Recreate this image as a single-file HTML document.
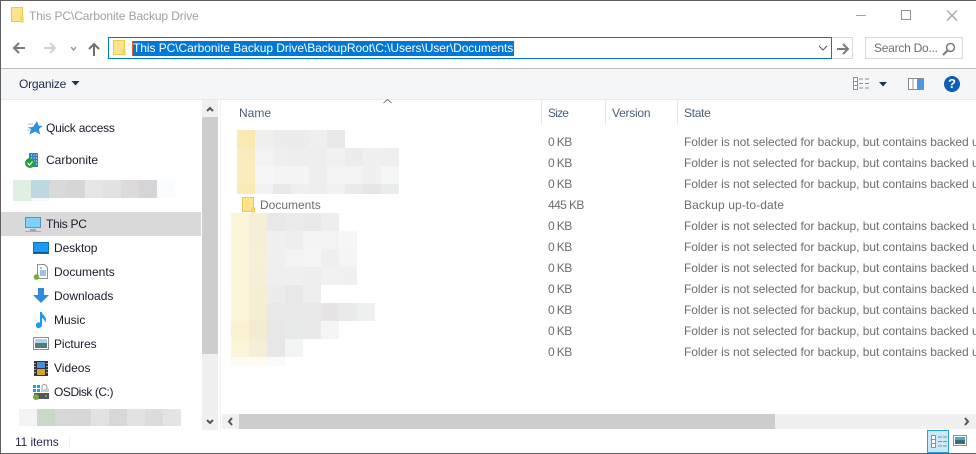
<!DOCTYPE html>
<html><head><meta charset="utf-8"><style>
html,body{margin:0;padding:0;width:976px;height:454px;overflow:hidden;background:#fff}
body{position:relative;font-family:"Liberation Sans",sans-serif;font-size:12px;color:#1b1b2b}
.a{position:absolute}
.t{position:absolute;white-space:nowrap;line-height:16px}
svg{position:absolute;overflow:visible}
.m{position:absolute}
.g{color:#6d6d6d}
.f{letter-spacing:-.04px}
.z{letter-spacing:-.6px}
</style></head><body>
<!-- window border -->
<div class="a" style="left:0;top:0;width:976px;height:1px;background:#5f5f5f"></div>
<div class="a" style="left:0;top:0;width:1px;height:454px;background:#5f5f5f"></div>
<div class="a" style="left:0;top:453px;width:976px;height:1px;background:#5f5f5f"></div>

<!-- title -->
<svg style="left:11px;top:7px" width="13" height="16" viewBox="0 0 13 16"><rect x=".5" y=".5" width="11" height="14" fill="#ffe38c" stroke="#eec94f"/><path d="M10 15V10h2v5z" fill="#ffe38c" stroke="#eec94f" stroke-width="1"/></svg>
<div class="t" style="left:29px;top:8px;color:#a0a0a0;font-size:12px;letter-spacing:-.1px">This PC\Carbonite Backup Drive</div>
<svg style="left:856px;top:10px" width="102" height="12"><path d="M0 5.500h10" stroke="#a0a0a0"/><rect x="45.500" y=".5" width="9" height="9" fill="none" stroke="#8f8f8f"/><path d="M91 .5l10 10M101 .5l-10 10" stroke="#8f8f8f" fill="none"/></svg>

<!-- nav -->
<svg style="left:13px;top:41px" width="95" height="16"><path d="M1 7h11M6 2L1 7l5 5" stroke="#7a7a7a" stroke-width="2" fill="none"/><path d="M31 7h11M37 2l5 5-5 5" stroke="#d2d2d2" stroke-width="2" fill="none"/><path d="M58 6l2.500 3L63 6" stroke="#9a9a9a" stroke-width="1.400" fill="none"/><path d="M81 15V3M76 8l5-5 5 5" stroke="#6f6f6f" stroke-width="2" fill="none"/></svg>

<!-- address -->
<div class="a" style="left:108px;top:37px;width:722px;height:20px;border:1px solid #0078d7"></div>
<svg style="left:113px;top:40px" width="13" height="16" viewBox="0 0 13 16"><rect x=".5" y=".5" width="11" height="14" fill="#ffe38c" stroke="#eec94f"/><path d="M10 15V10h2v5z" fill="#ffe38c" stroke="#eec94f"/></svg>
<div class="a" style="left:132px;top:41px;width:1px;height:15px;background:#e4632a"></div>
<div class="t" style="left:133px;top:41px;height:15px;line-height:15px;background:#0078d7;color:#fff;width:381px;overflow:hidden;letter-spacing:-.06px">This PC\Carbonite Backup Drive\BackupRoot\C:\Users\User\Documents</div>
<svg style="left:818px;top:45px" width="10" height="7"><path d="M1 1l4 4 4-4" stroke="#555" fill="none"/></svg>
<div class="a" style="left:832px;top:37px;width:20px;height:20px;border:1px solid #d9d9d9;border-left:0"></div>
<svg style="left:836px;top:43px" width="14" height="12"><path d="M1 6h11M7 1l5 5-5 5" stroke="#7c7c7c" stroke-width="2" fill="none"/></svg>
<div class="a" style="left:865px;top:37px;width:96px;height:20px;border:1px solid #d9d9d9"></div>
<div class="t g" style="left:874px;top:40px;letter-spacing:-.25px">Search Do...</div>
<svg style="left:942px;top:42px" width="14" height="14"><circle cx="8.500" cy="5.500" r="4" fill="none" stroke="#7c7c7c" stroke-width="1.500"/><path d="M5.500 8.500L1 13" stroke="#7c7c7c" stroke-width="2"/></svg>

<!-- toolbar -->
<div class="a" style="left:1px;top:68px;width:975px;height:1px;background:#bcbcbc"></div>
<div class="a" style="left:1px;top:69px;width:975px;height:30px;background:#f5f6f7"></div>
<div class="a" style="left:1px;top:99px;width:975px;height:1px;background:#e9e9e9"></div>
<div class="t" style="left:19px;top:76px;color:#1e2a4a;letter-spacing:-.2px">Organize</div>
<svg style="left:71px;top:81px" width="9" height="5"><path d="M.5 0h8L4.500 4.500z" fill="#1e3355"/></svg>
<svg style="left:853px;top:77px" width="17" height="13"><path d="M.5.500h4v12h-4zM.5 4.500h4M.5 8.500h4" stroke="#8f8f8f" fill="#fff"/><path d="M6 2h4M12 2h4M6 6.500h4M12 6.500h4M6 11h4M12 11h4" stroke="#8f8f8f"/></svg>
<svg style="left:879px;top:82px" width="8" height="5"><path d="M0 0h8L4 4.500z" fill="#1e3355"/></svg>
<svg style="left:908px;top:78px" width="16" height="12"><rect x=".5" y=".5" width="15" height="11" fill="#fff" stroke="#8a8a8a"/><rect x="9" y="1" width="6" height="10" fill="#4a98e0"/><path d="M5 1v10" stroke="#9a9a9a"/></svg>
<div class="a" style="left:944px;top:76px;width:16px;height:16px;border-radius:50%;background:#0c5fb4;color:#fff;font-weight:bold;font-size:13px;line-height:16px;text-align:center">?</div>

<!-- sidebar -->
<svg style="left:27px;top:121px" width="15" height="14"><path d="M10 0l1.500 4.500L15.500 5 12 8l1 5.500-5-3-5.500 3 1.500-5.500L.5 6.500l5.500-.5z" fill="#2c8fdf"/><path d="M1 3h5M0 9h3" stroke="#8cc4ef"/></svg>
<div class="t" style="left:46px;top:120px;letter-spacing:-.22px">Quick access</div>
<svg style="left:25px;top:153px" width="14" height="14"><rect x="4" y="0" width="9" height="14" fill="#2c7fd0"/><path d="M6 2h1M8.500 2h1M11 2h1M6 5h1M8.500 5h1M11 5h1M9 8h1M11 8h1M9 11h1M11 11h1" stroke="#fff"/><circle cx="5" cy="10" r="5" fill="#21a038"/><path d="M2.500 10l2 2 3-3.500" stroke="#fff" stroke-width="1.200" fill="none"/></svg>
<div class="t" style="left:46px;top:152px">Carbonite</div>
<div class="m" style="left:13px;top:180px;width:18px;height:21px;background:#dff0e3"></div>
<div class="m" style="left:31px;top:180px;width:18px;height:18px;background:#bcd8e2"></div>
<div class="m" style="left:31px;top:198px;width:18px;height:3px;background:#f3f8f4"></div>
<div class="m" style="left:49px;top:180px;width:18px;height:18px;background:#d9d9d9"></div>
<div class="m" style="left:67px;top:180px;width:18px;height:18px;background:#d6d6d6"></div>
<div class="m" style="left:85px;top:180px;width:18px;height:18px;background:#e6e6e8"></div>
<div class="m" style="left:103px;top:180px;width:18px;height:18px;background:#e2e2e2"></div>
<div class="m" style="left:121px;top:180px;width:18px;height:18px;background:#dcdada"></div>
<div class="m" style="left:139px;top:180px;width:18px;height:18px;background:#d6d4d6"></div>
<div class="m" style="left:157px;top:180px;width:18px;height:18px;background:#fbfcfe"></div>

<div class="a" style="left:1px;top:212px;width:200px;height:24px;background:#d9d9d9"></div>
<svg style="left:25px;top:217px" width="16" height="15"><rect x=".5" y=".5" width="15" height="10" fill="#7fd0fb" stroke="#5a93b8"/><path d="M5 13h6" stroke="#8fa9bb" stroke-width="2"/><path d="M0 14.500h16" stroke="#aab"/></svg>
<div class="t" style="left:46px;top:216px;letter-spacing:-.3px">This PC</div>
<svg style="left:33px;top:242px" width="16" height="12"><rect x=".5" y=".5" width="15" height="11" fill="#1a9bf0" stroke="#0b6fc0"/><path d="M1 10.500h14" stroke="#0a4f90"/></svg>
<div class="t" style="left:54px;top:240px;letter-spacing:-.1px">Desktop</div>
<svg style="left:34px;top:264px" width="14" height="16"><path d="M3.500.500h7l3 3v11h-10z" fill="#fff" stroke="#8f8f8f"/><path d="M6 4h2M6 7h6M6 9h6M6 11h6" stroke="#3a86c8"/><circle cx="2.500" cy="13" r="2.800" fill="#7aa83a"/></svg>
<div class="t" style="left:54px;top:264px">Documents</div>
<svg style="left:33px;top:288px" width="16" height="16"><path d="M5 0h6v7h5l-8 8-8-8h5z" fill="#2f8ae0"/></svg>
<div class="t" style="left:54px;top:288px">Downloads</div>
<svg style="left:35px;top:312px" width="12" height="16"><path d="M5 0h2c0 3 4 4 4 8 0 1-.5 2-1 2.500 0-2-1.500-4-3-4.500v7c0 2-2 3-4 3S1 14 1 12.500 3 10 5 10.500z" fill="#1a9bf0"/></svg>
<div class="t" style="left:54px;top:312px">Music</div>
<svg style="left:33px;top:337px" width="16" height="13"><rect x=".5" y=".5" width="15" height="12" fill="#fff" stroke="#8f8f8f"/><rect x="2" y="2" width="12" height="4" fill="#a9d3ee"/><rect x="2" y="6" width="12" height="5" fill="#4d7f78"/></svg>
<div class="t" style="left:54px;top:336px;letter-spacing:-.1px">Pictures</div>
<svg style="left:34px;top:361px" width="14" height="15"><rect width="14" height="15" fill="#333"/><rect x="3" y="1" width="8" height="6" fill="#4a8ee0"/><rect x="3" y="8" width="8" height="6" fill="#d8a030"/><path d="M1 2v1M1 5v1M1 8v1M1 11v1M13 2v1M13 5v1M13 8v1M13 11v1" stroke="#fff"/></svg>
<div class="t" style="left:54px;top:360px">Videos</div>
<svg style="left:33px;top:384px" width="16" height="16"><path d="M0 1h3v3H0zM4 1h3v3H4zM0 5h3v3H0zM4 5h3v3H4z" fill="#1a9bf0"/><path d="M9 6V3a2.500 2.500 0 0 1 5 0v3" fill="none" stroke="#9a9a9a"/><rect x="8" y="5" width="8" height="3" fill="#ccc"/><rect x="1" y="9" width="15" height="6" fill="#555"/><circle cx="3" cy="13" r="3" fill="#7aa83a"/><path d="M12 12h2" stroke="#7fe07f"/></svg>
<div class="t" style="left:54px;top:384px;letter-spacing:-.45px">OSDisk (C:)</div>
<div class="m" style="left:19px;top:409px;width:18px;height:17px;background:#f3f3f3"></div>
<div class="m" style="left:37px;top:409px;width:18px;height:17px;background:#c9d9c9"></div>
<div class="m" style="left:55px;top:409px;width:18px;height:17px;background:#d9d8d8"></div>
<div class="m" style="left:73px;top:409px;width:18px;height:17px;background:#d8d6d6"></div>
<div class="m" style="left:91px;top:409px;width:18px;height:17px;background:#e2e2e2"></div>
<div class="m" style="left:109px;top:409px;width:18px;height:17px;background:#d8d8d8"></div>
<div class="m" style="left:127px;top:409px;width:18px;height:17px;background:#e2e2e2"></div>
<div class="m" style="left:145px;top:409px;width:18px;height:17px;background:#dcdcdc"></div>
<div class="m" style="left:163px;top:409px;width:18px;height:17px;background:#e4e4e4"></div>

<!-- sidebar scrollbar -->
<div class="a" style="left:202px;top:100px;width:16px;height:330px;background:#f0f0f0"></div>
<div class="a" style="left:202px;top:117px;width:16px;height:237px;background:#cdcdcd"></div>
<svg style="left:206px;top:106px" width="8" height="6"><path d="M1 5l3-3 3 3" stroke="#555" stroke-width="2" fill="none"/></svg>
<svg style="left:206px;top:419px" width="8" height="6"><path d="M1 1l3 3 3-3" stroke="#555" stroke-width="2" fill="none"/></svg>
<div class="a" style="left:220px;top:100px;width:1px;height:330px;background:#f0f0f0"></div>

<!-- header -->
<div class="t" style="left:239px;top:105px;color:#4c607a">Name</div>
<div class="t" style="left:548px;top:105px;color:#4c607a;letter-spacing:-.8px">Size</div>
<div class="t" style="left:612px;top:105px;color:#4c607a;letter-spacing:-.25px">Version</div>
<div class="t" style="left:684px;top:105px;color:#4c607a;letter-spacing:-.3px">State</div>
<svg style="left:383px;top:99px" width="9" height="5"><path d="M.5 4L4.500 .5 8.500 4" stroke="#777" fill="none"/></svg>
<div class="a" style="left:541px;top:100px;width:1px;height:25px;background:#e5e5e5"></div>
<div class="a" style="left:605px;top:100px;width:1px;height:25px;background:#e5e5e5"></div>
<div class="a" style="left:677px;top:100px;width:1px;height:25px;background:#e5e5e5"></div>

<!-- mosaic 1 -->
<div class="m" style="left:237px;top:130px;width:18px;height:18px;background:#fce9b0"></div><div class="m" style="left:255px;top:130px;width:18px;height:18px;background:#f0f0ef"></div><div class="m" style="left:273px;top:130px;width:18px;height:18px;background:#ececec"></div><div class="m" style="left:291px;top:130px;width:18px;height:18px;background:#ebecec"></div><div class="m" style="left:309px;top:130px;width:18px;height:18px;background:#efefee"></div><div class="m" style="left:327px;top:130px;width:18px;height:18px;background:#e8e8e8"></div>
<div class="m" style="left:237px;top:148px;width:18px;height:18px;background:#fcebbd"></div><div class="m" style="left:255px;top:148px;width:18px;height:18px;background:#f3f3f3"></div><div class="m" style="left:273px;top:148px;width:18px;height:18px;background:#efefef"></div><div class="m" style="left:291px;top:148px;width:18px;height:18px;background:#eeeeee"></div><div class="m" style="left:309px;top:148px;width:18px;height:18px;background:#eeeeee"></div><div class="m" style="left:327px;top:148px;width:18px;height:18px;background:#f1f1f1"></div><div class="m" style="left:345px;top:148px;width:18px;height:18px;background:#ececec"></div><div class="m" style="left:363px;top:148px;width:18px;height:18px;background:#f0f0f0"></div><div class="m" style="left:381px;top:148px;width:18px;height:18px;background:#efefef"></div>
<div class="m" style="left:237px;top:166px;width:18px;height:18px;background:#fcebbd"></div><div class="m" style="left:255px;top:166px;width:18px;height:18px;background:#f7f7f7"></div><div class="m" style="left:273px;top:166px;width:18px;height:18px;background:#f4f4f4"></div><div class="m" style="left:291px;top:166px;width:18px;height:18px;background:#f4f4f4"></div><div class="m" style="left:309px;top:166px;width:18px;height:18px;background:#eeeeee"></div><div class="m" style="left:327px;top:166px;width:18px;height:18px;background:#f3f3f3"></div><div class="m" style="left:345px;top:166px;width:18px;height:18px;background:#f3f3f3"></div><div class="m" style="left:363px;top:166px;width:18px;height:18px;background:#f0f0f0"></div><div class="m" style="left:381px;top:166px;width:18px;height:18px;background:#f5f6f6"></div>
<div class="m" style="left:237px;top:184px;width:18px;height:10px;background:#fce9b8"></div><div class="m" style="left:255px;top:184px;width:18px;height:10px;background:#f3f2f1"></div><div class="m" style="left:273px;top:184px;width:18px;height:10px;background:#e9e9e9"></div><div class="m" style="left:291px;top:184px;width:18px;height:10px;background:#f0f0f0"></div><div class="m" style="left:309px;top:184px;width:18px;height:10px;background:#eeeeee"></div><div class="m" style="left:327px;top:184px;width:18px;height:10px;background:#f0f1f1"></div><div class="m" style="left:345px;top:184px;width:18px;height:10px;background:#eaeaea"></div><div class="m" style="left:363px;top:184px;width:18px;height:10px;background:#e7e6e4"></div><div class="m" style="left:381px;top:184px;width:18px;height:10px;background:#ebecee"></div>

<!-- documents row -->
<svg style="left:242px;top:197px" width="14" height="16" viewBox="0 0 14 16"><rect x=".5" y=".5" width="11" height="14" fill="#ffe38c" stroke="#eec94f"/><path d="M10 15v-4h2.500v4z" fill="#ffe38c" stroke="#eec94f"/></svg>
<div class="t g" style="left:260px;top:197px">Documents</div>

<!-- mosaic 2 -->
<div class="m" style="left:231px;top:213px;width:18px;height:18px;background:#fdf5da"></div><div class="m" style="left:249px;top:213px;width:18px;height:18px;background:#f6efd8"></div><div class="m" style="left:267px;top:213px;width:18px;height:18px;background:#e8e8e8"></div><div class="m" style="left:285px;top:213px;width:18px;height:18px;background:#ebebeb"></div><div class="m" style="left:303px;top:213px;width:18px;height:18px;background:#e9e9e9"></div><div class="m" style="left:321px;top:213px;width:18px;height:18px;background:#edeef0"></div>
<div class="m" style="left:231px;top:231px;width:18px;height:18px;background:#fdf5da"></div><div class="m" style="left:249px;top:231px;width:18px;height:18px;background:#f6efd8"></div><div class="m" style="left:267px;top:231px;width:18px;height:18px;background:#f0f0f0"></div><div class="m" style="left:285px;top:231px;width:18px;height:18px;background:#eeeeee"></div><div class="m" style="left:303px;top:231px;width:18px;height:18px;background:#f4f4f4"></div><div class="m" style="left:321px;top:231px;width:18px;height:18px;background:#f3f3f3"></div><div class="m" style="left:339px;top:231px;width:18px;height:18px;background:#f6f7f7"></div>
<div class="m" style="left:231px;top:249px;width:18px;height:18px;background:#fdf5da"></div><div class="m" style="left:249px;top:249px;width:18px;height:18px;background:#f7f0d8"></div><div class="m" style="left:267px;top:249px;width:18px;height:18px;background:#f0f0ef"></div><div class="m" style="left:285px;top:249px;width:18px;height:18px;background:#f3f3f3"></div><div class="m" style="left:303px;top:249px;width:18px;height:18px;background:#f5f5f5"></div><div class="m" style="left:321px;top:249px;width:18px;height:18px;background:#efefef"></div><div class="m" style="left:339px;top:249px;width:18px;height:18px;background:#f5f5f5"></div>
<div class="m" style="left:231px;top:267px;width:18px;height:18px;background:#fdf5da"></div><div class="m" style="left:249px;top:267px;width:18px;height:18px;background:#f6efd8"></div><div class="m" style="left:267px;top:267px;width:18px;height:18px;background:#efefef"></div><div class="m" style="left:285px;top:267px;width:18px;height:18px;background:#efefef"></div><div class="m" style="left:303px;top:267px;width:18px;height:18px;background:#eeeeee"></div><div class="m" style="left:321px;top:267px;width:18px;height:18px;background:#f1f1f1"></div><div class="m" style="left:339px;top:267px;width:18px;height:18px;background:#f0f0f0"></div>
<div class="m" style="left:231px;top:285px;width:18px;height:18px;background:#fdf5da"></div><div class="m" style="left:249px;top:285px;width:18px;height:18px;background:#f5eed4"></div><div class="m" style="left:267px;top:285px;width:18px;height:18px;background:#ececec"></div><div class="m" style="left:285px;top:285px;width:18px;height:18px;background:#e8e8e8"></div><div class="m" style="left:303px;top:285px;width:18px;height:18px;background:#eeeeee"></div>
<div class="m" style="left:231px;top:303px;width:18px;height:18px;background:#fdf5da"></div><div class="m" style="left:249px;top:303px;width:18px;height:18px;background:#f5eed4"></div><div class="m" style="left:267px;top:303px;width:18px;height:18px;background:#e8e8e8"></div><div class="m" style="left:285px;top:303px;width:18px;height:18px;background:#e9e9e9"></div><div class="m" style="left:303px;top:303px;width:18px;height:18px;background:#e9e9e9"></div><div class="m" style="left:321px;top:303px;width:18px;height:18px;background:#e7e4e5"></div><div class="m" style="left:339px;top:303px;width:18px;height:18px;background:#e9ebea"></div><div class="m" style="left:357px;top:303px;width:18px;height:18px;background:#eff1f0"></div>
<div class="m" style="left:231px;top:321px;width:18px;height:18px;background:#fcf2d2"></div><div class="m" style="left:249px;top:321px;width:18px;height:18px;background:#f3ecd0"></div><div class="m" style="left:267px;top:321px;width:18px;height:18px;background:#e7e7e7"></div><div class="m" style="left:285px;top:321px;width:18px;height:18px;background:#e8eaea"></div><div class="m" style="left:303px;top:321px;width:18px;height:18px;background:#e9e9e9"></div><div class="m" style="left:321px;top:321px;width:18px;height:18px;background:#f4f6f5"></div>
<div class="m" style="left:231px;top:339px;width:18px;height:18px;background:#fdf5da"></div><div class="m" style="left:249px;top:339px;width:18px;height:18px;background:#f6efd8"></div><div class="m" style="left:267px;top:339px;width:18px;height:18px;background:#e7e7e7"></div><div class="m" style="left:285px;top:339px;width:18px;height:18px;background:#f3f5f4"></div>
<div class="m" style="left:231px;top:357px;width:18px;height:9px;background:#fefbf2"></div><div class="m" style="left:249px;top:357px;width:18px;height:9px;background:#fefbf2"></div><div class="m" style="left:267px;top:357px;width:18px;height:9px;background:#fafafa"></div>

<!-- size/state columns -->
<div class="t g z" style="left:548px;top:134px">0 KB</div><div class="t g f" style="left:684px;top:134px">Folder is not selected for backup, but contains backed up files</div>
<div class="t g z" style="left:548px;top:155px">0 KB</div><div class="t g f" style="left:684px;top:155px">Folder is not selected for backup, but contains backed up files</div>
<div class="t g z" style="left:548px;top:176px">0 KB</div><div class="t g f" style="left:684px;top:176px">Folder is not selected for backup, but contains backed up files</div>
<div class="t g z" style="left:548px;top:197px">445 KB</div><div class="t g" style="left:684px;top:197px;letter-spacing:.12px">Backup up-to-date</div>
<div class="t g z" style="left:548px;top:218px">0 KB</div><div class="t g f" style="left:684px;top:218px">Folder is not selected for backup, but contains backed up files</div>
<div class="t g z" style="left:548px;top:239px">0 KB</div><div class="t g f" style="left:684px;top:239px">Folder is not selected for backup, but contains backed up files</div>
<div class="t g z" style="left:548px;top:260px">0 KB</div><div class="t g f" style="left:684px;top:260px">Folder is not selected for backup, but contains backed up files</div>
<div class="t g z" style="left:548px;top:281px">0 KB</div><div class="t g f" style="left:684px;top:281px">Folder is not selected for backup, but contains backed up files</div>
<div class="t g z" style="left:548px;top:302px">0 KB</div><div class="t g f" style="left:684px;top:302px">Folder is not selected for backup, but contains backed up files</div>
<div class="t g z" style="left:548px;top:323px">0 KB</div><div class="t g f" style="left:684px;top:323px">Folder is not selected for backup, but contains backed up files</div>
<div class="t g z" style="left:548px;top:344px">0 KB</div><div class="t g f" style="left:684px;top:344px">Folder is not selected for backup, but contains backed up files</div>

<!-- hscroll -->
<div class="a" style="left:222px;top:414px;width:754px;height:15px;background:#f0f0f0"></div>
<div class="a" style="left:239px;top:414px;width:536px;height:15px;background:#cdcdcd"></div>
<svg style="left:227px;top:417px" width="6" height="9"><path d="M5 1L2 4.500 5 8" stroke="#555" stroke-width="2" fill="none"/></svg>
<svg style="left:964px;top:417px" width="6" height="9"><path d="M1 1l3 3.500L1 8" stroke="#555" stroke-width="2" fill="none"/></svg>

<!-- status -->
<div class="t" style="left:15px;top:434px;color:#2b2b55;letter-spacing:-.1px">11 items</div>
<div class="a" style="left:69px;top:436px;width:1px;height:12px;background:#efefef"></div>
<div class="a" style="left:927px;top:430px;width:20px;height:21px;border:1px solid #26a0da;background:#cbe8f6"></div>
<svg style="left:931px;top:435px" width="17" height="13"><path d="M.5.500h4v12h-4zM.5 4.500h4M.5 8.500h4" stroke="#8f8f8f" fill="#fff"/><path d="M7 2h4M12 2h4M7 6.500h4M12 6.500h4M7 11h4M12 11h4" stroke="#7f8f9a"/></svg>
<svg style="left:953px;top:435px" width="14" height="11"><rect x=".5" y=".5" width="13" height="10" fill="#fff" stroke="#8f8f8f"/><rect x="2" y="2" width="10" height="3" fill="#4aa3dd"/><rect x="2" y="5" width="10" height="4" fill="#3d6f68"/></svg>
</body></html>
